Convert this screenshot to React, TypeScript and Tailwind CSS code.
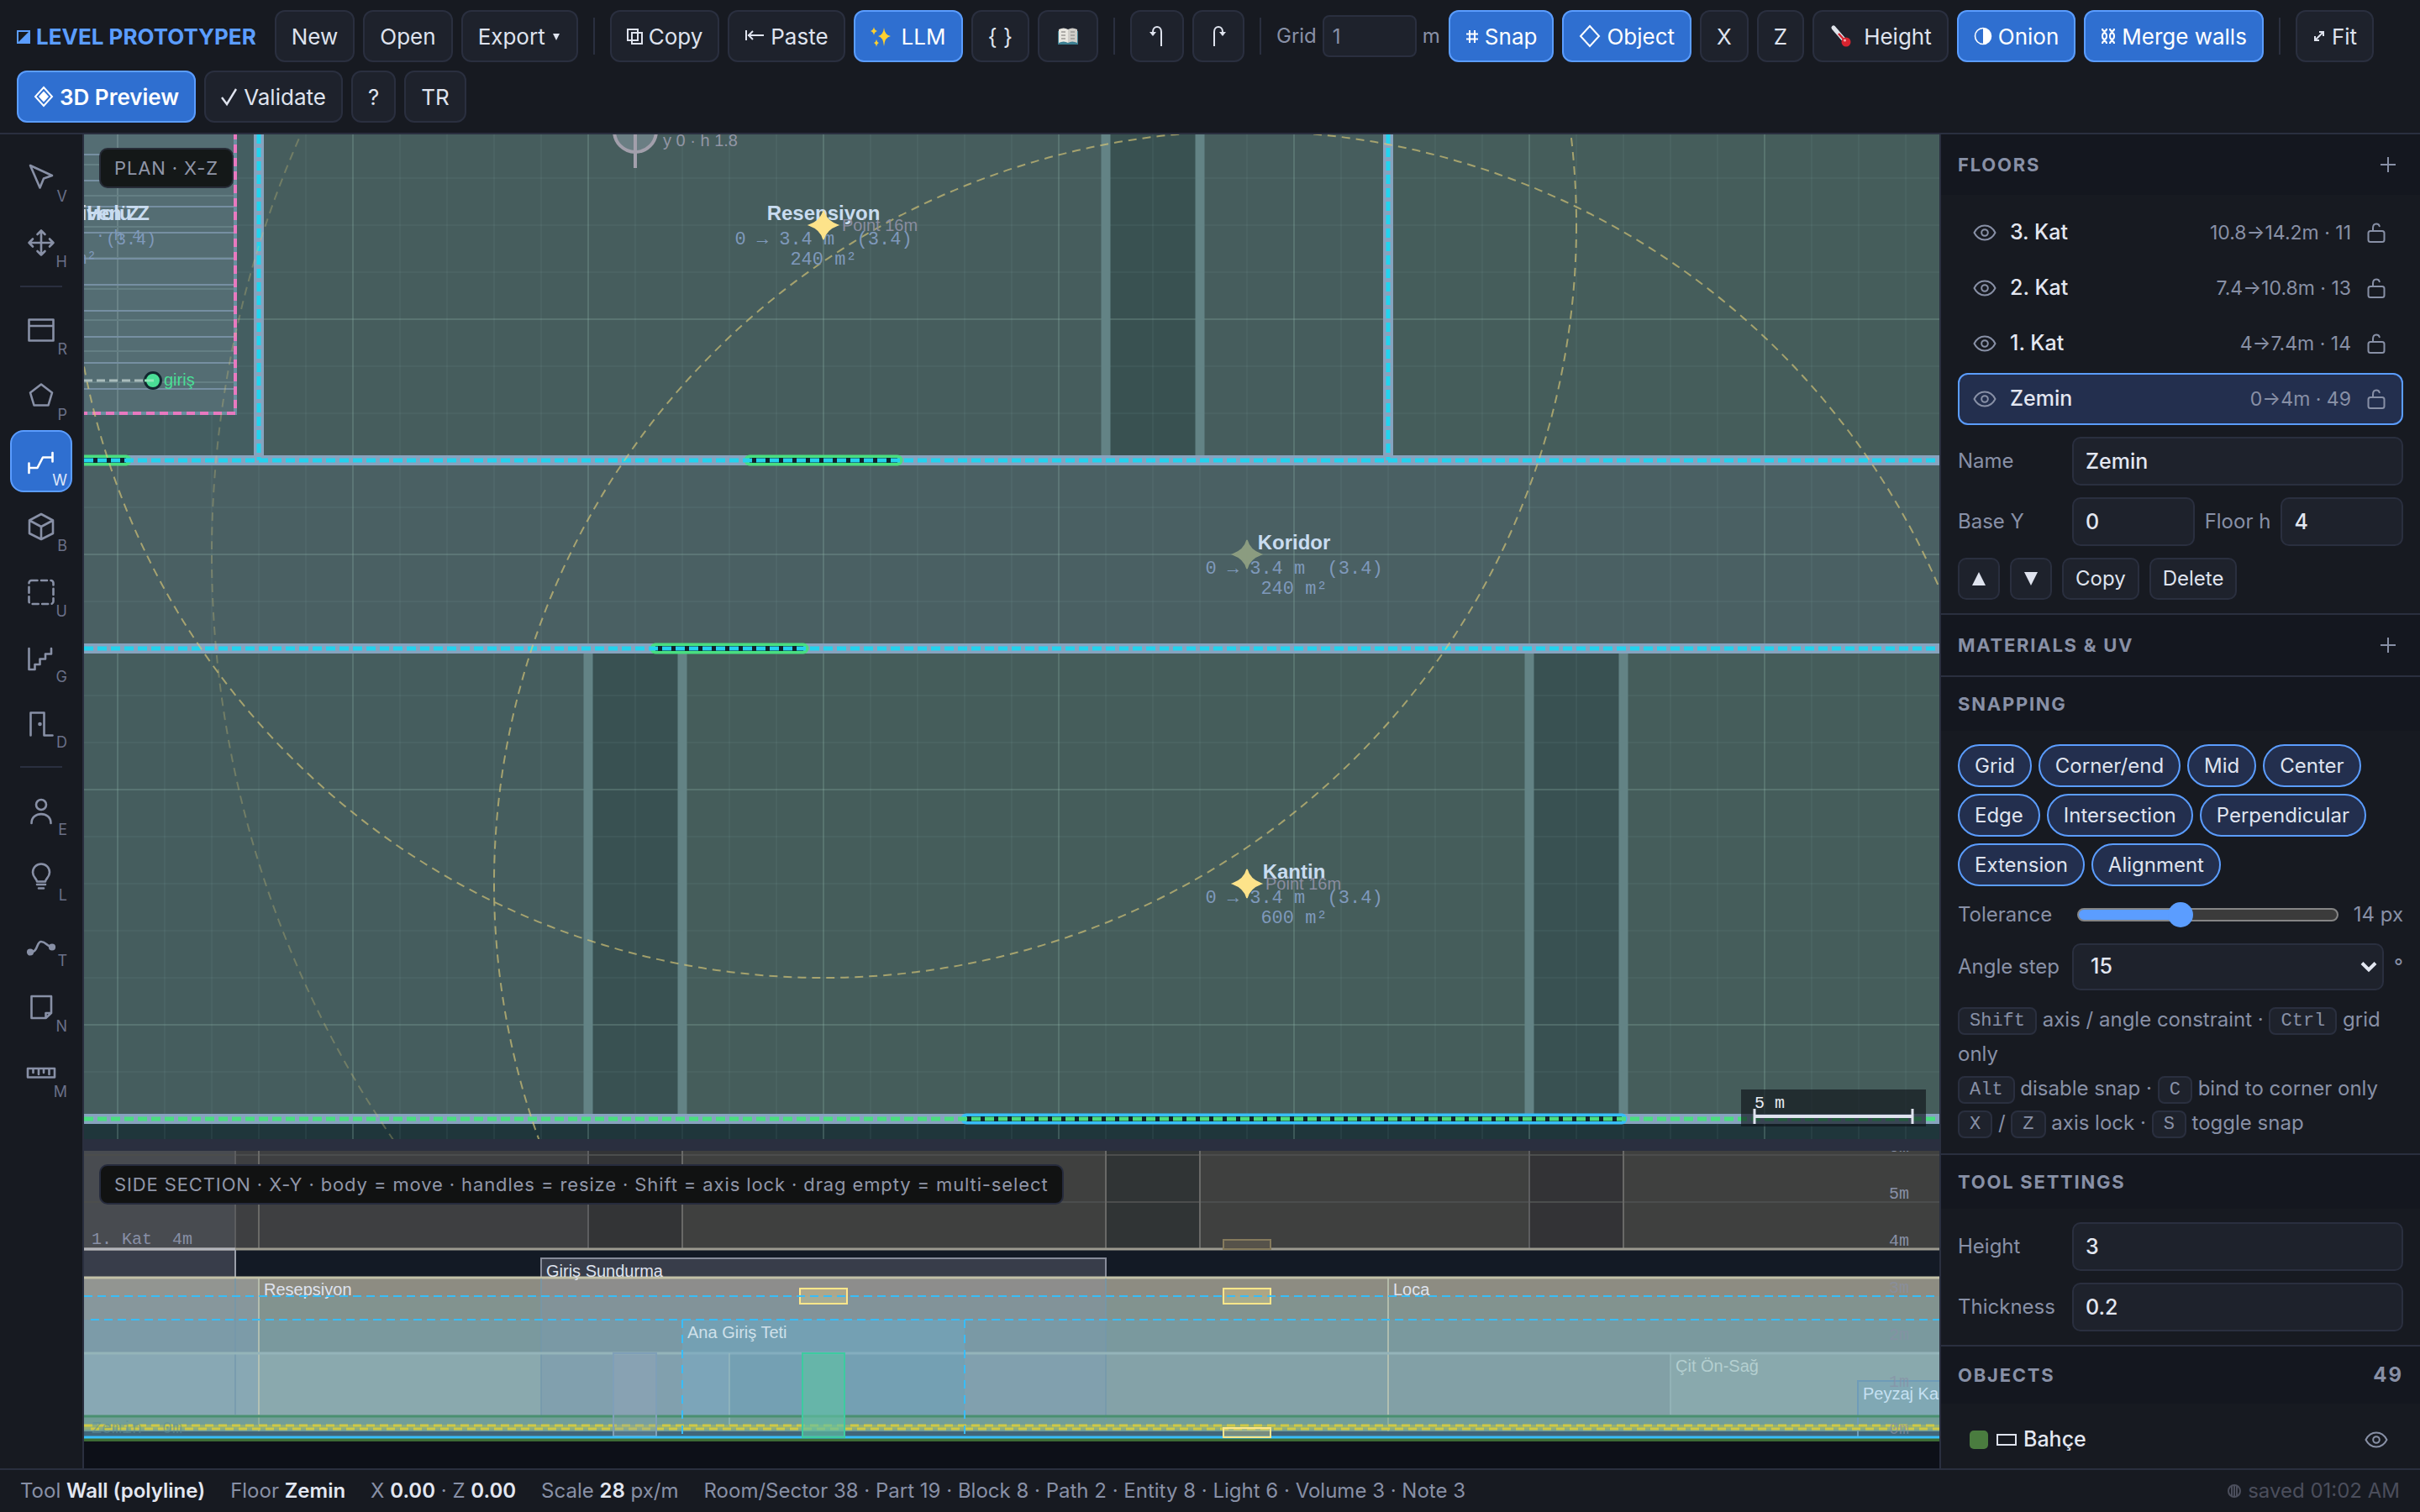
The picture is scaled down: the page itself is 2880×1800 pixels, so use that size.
import type { ReactNode } from "react";
import clsx from "clsx";

/* ---------- Icons ---------- */

function ToolIcon({ children }: { children: ReactNode }) {
  return (
    <svg
      viewBox="0 0 40 40"
      className="size-10"
      fill="none"
      stroke="currentColor"
      strokeWidth="2.6"
      strokeLinecap="round"
      strokeLinejoin="round"
      aria-hidden="true"
    >
      {children}
    </svg>
  );
}

function Glyph({ w, children }: { w: number; children: ReactNode }) {
  return (
    <svg
      width={w}
      height={28}
      viewBox={`0 0 ${w} 28`}
      className="shrink-0"
      fill="none"
      stroke="currentColor"
      strokeWidth="2"
      aria-hidden="true"
    >
      {children}
    </svg>
  );
}

function EyeIcon() {
  return (
    <svg viewBox="0 0 28 28" className="size-7 shrink-0" fill="none" stroke="currentColor" strokeWidth="2" aria-hidden="true">
      <path d="M1.5 14C4.5 8.2 9 5.5 14 5.5S23.5 8.2 26.5 14C23.5 19.8 19 22.5 14 22.5S4.5 19.8 1.5 14Z" strokeLinejoin="round" />
      <circle cx="14" cy="14" r="3.8" />
    </svg>
  );
}

function LockIcon() {
  return (
    <svg viewBox="0 0 28 28" className="size-7 shrink-0" fill="none" stroke="currentColor" strokeWidth="2" strokeLinecap="round" aria-hidden="true">
      <rect x="4.5" y="12" width="19" height="13" rx="2.5" />
      <path d="M10 12V8.5C10 5.5 11.5 3.5 14 3.5C16 3.5 17.3 4.5 17.8 6.2" />
    </svg>
  );
}

function PlusIcon() {
  return (
    <svg viewBox="0 0 20 20" className="size-5" stroke="currentColor" strokeWidth="2" aria-hidden="true">
      <path d="M10 1V19M1 10H19" />
    </svg>
  );
}

/* ---------- Top toolbar ---------- */

function Btn({ active, label, children }: { active?: boolean; label?: string; children: ReactNode }) {
  return (
    <button
      type="button"
      aria-label={label}
      className={clsx(
        "flex h-[62px] items-center gap-[7px] rounded-[12px] border-2 px-[18px] text-[26px] whitespace-nowrap",
        active ? "border-[#5b9dff] bg-[#2f6fd0] text-white" : "border-[#2a2f3f] bg-[#1e222c] text-[#dfe3ee]",
      )}
    >
      {children}
    </button>
  );
}

function Sep() {
  return <div className="mx-2 h-11 w-0.5 bg-[#2a2f3f]" />;
}

function Toolbar() {
  return (
    <header className="flex flex-wrap items-center gap-[10px] border-b-2 border-[#2a2f3f] bg-[#171a21] px-5 py-3">
      <h1 className="mr-3 flex items-center gap-[7px] text-[26px] font-bold whitespace-nowrap text-[#5b9dff]">
        <Glyph w={16}>
          <rect x="1" y="8" width="14" height="14" />
          <path d="M15 8V22H1Z" fill="currentColor" stroke="none" />
        </Glyph>
        LEVEL PROTOTYPER
      </h1>
      <Btn>New</Btn>
      <Btn>Open</Btn>
      <Btn>
        Export
        <Glyph w={12}>
          <path d="M2 11H10L6 19Z" fill="currentColor" stroke="none" />
        </Glyph>
      </Btn>
      <Sep />
      <Btn>
        <Glyph w={19}>
          <path d="M1 6H13V19H1ZM6 10H18V23H6Z" />
        </Glyph>
        Copy
      </Btn>
      <Btn>
        <Glyph w={24}>
          <path d="M2 7V19M4 13H23M10 8L5 13L10 18" />
        </Glyph>
        Paste
      </Btn>
      <Btn active>
        <Glyph w={30}>
          <g fill="#ffd02e" stroke="none">
            <path d="M16 4Q17 13 24 14Q17 15 16 26Q15 15 9 14Q15 13 16 4Z" />
            <path d="M4 3Q4.5 7 8 8Q4.5 9 4 13Q3.5 9 0 8Q3.5 7 4 3Z" />
            <path d="M7 18Q7.5 21 10 22Q7.5 23 7 27Q6.5 23 4 22Q6.5 21 7 18Z" />
          </g>
        </Glyph>
        LLM
      </Btn>
      <Btn label="JSON">{"{ }"}</Btn>
      <Btn label="Guide">
        <Glyph w={32}>
          <g stroke="none">
            <path d="M4 8H28V24H4Z" fill="#3d7f92" />
            <path d="M5 6Q11 3 16 6V22Q11 19 5 22Z" fill="#e8e6e0" />
            <path d="M27 6Q21 3 16 6V22Q21 19 27 22Z" fill="#cfcdc8" />
          </g>
          <path d="M8 9H13M8 13H13M8 17H13M19 9H24M19 13H24M19 17H24" stroke="#9b9995" strokeWidth="1.5" />
        </Glyph>
      </Btn>
      <Sep />
      <Btn label="Undo">
        <Glyph w={24}>
          <path d="M17 26V9C17 1 7 1 7 9V12" />
          <path d="M3 9H11L7 14Z" fill="currentColor" stroke="none" />
        </Glyph>
      </Btn>
      <Btn label="Redo">
        <Glyph w={22}>
          <path d="M6 26V9C6 1 16 1 16 9V12" />
          <path d="M12 9H20L16 14Z" fill="currentColor" stroke="none" />
        </Glyph>
      </Btn>
      <Sep />
      <label className="flex items-center gap-[7px] text-[24px] text-[#8890a6]">
        Grid
        <input
          type="text"
          inputMode="numeric"
          defaultValue="1"
          className="h-[50px] w-28 rounded-[8px] border-2 border-[#2a2f3f] bg-[#1e222c] px-[10px]"
        />
        m
      </label>
      <Btn active>
        <Glyph w={16}>
          <path d="M5 7V22M11 7V22M1 11.5H15M1 17.5H15" />
        </Glyph>
        Snap
      </Btn>
      <Btn active>
        <Glyph w={26}>
          <path d="M13 2L24 14L13 26L2 14Z" />
        </Glyph>
        Object
      </Btn>
      <Btn>X</Btn>
      <Btn>Z</Btn>
      <Btn>
        <Glyph w={34}>
          <path d="M5 4L18 19" stroke="#dfe3ea" strokeWidth="5" strokeLinecap="round" />
          <path d="M11 11L20 21" stroke="#d8232f" strokeWidth="2.5" />
          <circle cx="20" cy="21" r="5.5" fill="#d8232f" stroke="none" />
          <circle cx="18.5" cy="19" r="1.6" fill="#f4a5a9" stroke="none" />
        </Glyph>
        Height
      </Btn>
      <Btn active>
        <Glyph w={22}>
          <circle cx="11" cy="14" r="9.5" strokeWidth="1.6" />
          <path d="M11 4.5A9.5 9.5 0 0 1 11 23.5Z" fill="currentColor" stroke="none" />
        </Glyph>
        Onion
      </Btn>
      <Btn active>
        <Glyph w={18}>
          <path d="M2 5C2 9 7 9 7 5M2 23C2 19 7 19 7 23M11 5C11 9 16 9 16 5M11 23C11 19 16 19 16 23M4.5 8V10M13.5 8V10M4.5 18V20M13.5 18V20" />
          <ellipse cx="4.5" cy="14" rx="2.5" ry="3.8" />
          <ellipse cx="13.5" cy="14" rx="2.5" ry="3.8" />
        </Glyph>
        Merge walls
      </Btn>
      <Sep />
      <Btn>
        <Glyph w={16}>
          <path d="M3 19L13 9M8 9H13V14M3 14V19H8" />
        </Glyph>
        Fit
      </Btn>
      <Btn active>
        <Glyph w={24}>
          <path d="M12 3L22 14L12 25L2 14Z" />
          <path d="M12 7.5L18 14L12 20.5L6 14Z" fill="currentColor" stroke="none" />
        </Glyph>
        <span className="font-semibold">3D Preview</span>
      </Btn>
      <Btn>
        <Glyph w={20}>
          <path d="M1 15L7 23L18 5" strokeWidth="2.4" />
        </Glyph>
        Validate
      </Btn>
      <Btn>?</Btn>
      <Btn>TR</Btn>
    </header>
  );
}

/* ---------- Left tool rail ---------- */

const TOOLS: { key: string; name: string; breakAfter?: boolean; icon: ReactNode }[] = [
  { key: "V", name: "Select", icon: <path d="M7 6L33 18L23 21.5L18.5 32.5Z" /> },
  {
    key: "H",
    name: "Pan",
    breakAfter: true,
    icon: <path d="M20 5.5V34.5M5.5 20H34.5M15.5 10L20 5.5L24.5 10M15.5 30L20 34.5L24.5 30M10 15.5L5.5 20L10 24.5M30 15.5L34.5 20L30 24.5" />,
  },
  { key: "R", name: "Room", icon: <path d="M5.5 7.5H34.5V32.5H5.5ZM5.5 15H34.5" /> },
  { key: "P", name: "Polygon", icon: <path d="M20 6.5L33 16.5L28.5 31.5H11.5L7 16.5Z" /> },
  { key: "W", name: "Wall (polyline)", icon: <path d="M5.5 22.5V34M5.5 28H15.5L22 15.5H33.5M33.5 10V20.5" /> },
  { key: "B", name: "Block", icon: <path d="M20 5L34 12.5V28L20 35L6 28V12.5ZM6 12.5L20 20L34 12.5M20 20V35" /> },
  { key: "U", name: "Volume", icon: <rect x="5.5" y="6" width="29" height="28" rx="3" strokeDasharray="7 4.5" /> },
  { key: "G", name: "Stairs", icon: <path d="M5.5 9V34H12.5V28H18.5V21.5H25V15.5H32V9" /> },
  {
    key: "D",
    name: "Door",
    breakAfter: true,
    icon: (
      <>
        <path d="M7.5 34.5V7.5H23.5V34.5H33.5" />
        <circle cx="18.5" cy="21" r="1" />
      </>
    ),
  },
  {
    key: "E",
    name: "Entity",
    icon: (
      <>
        <circle cx="20" cy="13" r="6" />
        <path d="M8.5 35C8.5 20.5 31.5 20.5 31.5 35" />
      </>
    ),
  },
  {
    key: "L",
    name: "Light",
    icon: <path d="M15 26.5C15 23 10 21.5 10 15.5A10 10 0 0 1 30 15.5C30 21.5 25 23 25 26.5ZM15 30H25M17 34.5H23" />,
  },
  {
    key: "T",
    name: "Path",
    icon: (
      <>
        <path d="M7 32.5C17 32.5 14 20 20 20C26 20 27 26 33 26.5" />
        <circle cx="7" cy="32.5" r="2.8" fill="currentColor" />
        <circle cx="33" cy="26.5" r="2.8" fill="currentColor" />
      </>
    ),
  },
  { key: "N", name: "Note", icon: <path d="M8.5 7H32V27L25.5 33H8.5ZM25.5 33V27H32" /> },
  { key: "M", name: "Measure", icon: <path d="M4 15H36V25.5H4ZM10.5 15V20M17 15V22M23 15V20M29.5 15V22" /> },
];

function ToolRail() {
  return (
    <nav className="flex w-[100px] shrink-0 flex-col items-center gap-1 border-r-2 border-[#2a2f3f] bg-[#171a21] py-[14px]">
      {TOOLS.map((tool) => (
        <div key={tool.key} className="contents">
          <button
            type="button"
            title={tool.name}
            className={clsx(
              "relative flex size-[74px] shrink-0 items-center justify-center rounded-[16px] border-2",
              tool.key === "W" ? "border-[#5b9dff] bg-[#2f6fd0] text-white" : "border-transparent text-[#8890a6]",
            )}
          >
            <ToolIcon>{tool.icon}</ToolIcon>
            <span
              className={clsx(
                "absolute right-1 bottom-0 text-[18px] leading-6",
                tool.key === "W" ? "text-[#dfe8fa]" : "text-[#6a7088]",
              )}
            >
              {tool.key}
            </span>
          </button>
          {tool.breakAfter && <div className="my-[10px] h-0.5 w-[50px] shrink-0 bg-[#2a2f3f]" />}
        </div>
      ))}
    </nav>
  );
}

/* ---------- Plan view (X-Z) ---------- */

const MONO = "font-['Liberation_Mono',monospace]";
const SANS = "font-['Liberation_Sans',sans-serif]";

const steps = (from: number, to: number, by: number) => {
  const out: number[] = [];
  for (let v = from; v <= to; v += by) out.push(v);
  return out;
};

const MINOR_X = steps(140, 2308, 56);
const MAJOR_X = steps(140, 2308, 280);
const MINOR_Y = steps(212, 1300, 56);
const MAJOR_Y = steps(380, 1300, 280);

function RoomLabel({ x, y, name, area }: { x: number; y: number; name: string; area: string }) {
  return (
    <g textAnchor="middle">
      <text x={x} y={y} fill="#c9dcf0" className={`${SANS} text-[24px] font-bold`}>{name}</text>
      <text x={x} y={y + 29} fill="#7f99bb" className={`${MONO} text-[22px] whitespace-pre`}>{"0 → 3.4 m  (3.4)"}</text>
      <text x={x} y={y + 53} fill="#7f99bb" className={`${MONO} text-[22px]`}>{area}</text>
    </g>
  );
}

function Star({ x, y, fill }: { x: number; y: number; fill: string }) {
  return (
    <path
      transform={`translate(${x} ${y})`}
      d="M0 -17Q3 -5 17 0Q3 5 0 17Q-3 5 -17 0Q-3 -5 0 -17Z"
      fill={fill}
      stroke={fill}
      strokeWidth="1.5"
    />
  );
}

function Opening({ x1, x2, y, color }: { x1: number; x2: number; y: number; color: string }) {
  return (
    <>
      <path d={`M${x1} ${y}H${x2}`} stroke={color} strokeWidth="13" strokeLinecap="round" />
      <path d={`M${x1} ${y}H${x2}`} stroke="#10232c" strokeWidth="6" />
    </>
  );
}

function PlanView() {
  return (
    <section className="relative min-h-0 flex-1 overflow-hidden">
      <svg viewBox="100 160 2208 1196" preserveAspectRatio="xMinYMin slice" className="block size-full" fill="none">
        <rect x="100" y="160" width="2208" height="1196" fill="#1f363b" />
        <rect x="100" y="160" width="2208" height="1172" fill="#455d5b" />
        <rect x="100" y="160" width="208" height="388" fill="#445e61" />
        <rect x="308" y="160" width="1344" height="388" fill="#465d5d" />
        <rect x="100" y="548" width="2208" height="224" fill="#4a6063" />
        <rect x="100" y="772" width="600" height="560" fill="#455d5e" />

        {/* shafts between rooms */}
        <rect x="1316" y="160" width="112" height="388" fill="#395151" />
        <rect x="700" y="772" width="112" height="560" fill="#395152" />
        <rect x="1820" y="772" width="112" height="560" fill="#395152" />

        <g stroke="#8fb0ae" strokeOpacity="0.08" strokeWidth="2">
          {MINOR_X.map((x) => <path key={x} d={`M${x} 160V1356`} />)}
          {MINOR_Y.map((y) => <path key={y} d={`M100 ${y}H2308`} />)}
        </g>
        <g stroke="#8fb0a4" strokeOpacity="0.22" strokeWidth="2">
          {MAJOR_X.map((x) => <path key={x} d={`M${x} 160V1356`} />)}
          {MAJOR_Y.map((y) => <path key={y} d={`M100 ${y}H2308`} />)}
        </g>

        <g stroke="#638385" strokeWidth="11">
          <path d="M1316 160V548M1428 160V548M700 772V1332M812 772V1332M1820 772V1332M1932 772V1332" />
        </g>

        {/* staircase */}
        <rect x="60" y="120" width="220" height="372" fill="#546d73" />
        <path d="M140 160V492" stroke="#6a8387" strokeWidth="2" />
        <g stroke="#647f84" strokeWidth="2">
          {steps(196, 470, 37).map((y) => <path key={y} d={`M100 ${y}H280`} />)}
        </g>
        <g stroke="#768fa2" strokeWidth="2">
          {steps(184, 470, 31).map((y) => <path key={y} d={`M100 ${y}H280`} />)}
        </g>
        <rect x="60" y="120" width="220" height="372" stroke="#6b8fa0" strokeWidth="4" />
        <rect x="60" y="120" width="220" height="372" stroke="#e879c0" strokeWidth="4" strokeDasharray="10 6" />
        <text x="166" y="262" textAnchor="end" fill="#c9dcf0" className={`${SANS} text-[24px] font-bold`}>Merdiven Z</text>
        <text x="178" y="262" textAnchor="end" fill="#c9dcf0" className={`${SANS} text-[24px] font-bold`}>Holü Z</text>
        <text x="186" y="291" textAnchor="end" fill="#7f99bb" className={`${MONO} text-[20px]`}>(3.4)</text>
        <text x="168" y="286" textAnchor="end" fill="#7f99bb" className={`${MONO} text-[18px]`}>· h 4</text>
        <text x="115" y="314" textAnchor="end" fill="#7f99bb" className={`${MONO} text-[20px]`}>m²</text>

        {/* walls */}
        <g stroke="#87a3bf" strokeWidth="12">
          <path d="M308 160V548M1652 160V548" />
          <path d="M100 548H2308M100 772H2308M100 1332H2308" />
        </g>
        <Opening x1={90} x2={150} y={548} color="#4ade80" />
        <Opening x1={892} x2={1068} y={548} color="#4ade80" />
        <Opening x1={780} x2={956} y={772} color="#4ade80" />
        <Opening x1={1150} x2={1930} y={1332} color="#38bdf8" />
        <g stroke="#22d3ee" strokeWidth="5" strokeDasharray="11 5">
          <path d="M308 160V548M1652 160V548M100 548H2308M100 772H2308" />
          <path d="M100 1332H2308" stroke="#4ade80" />
        </g>

        {/* light ranges */}
        <g stroke="#d8c878" strokeWidth="2" strokeDasharray="10 7">
          <circle cx="980" cy="268" r="896" strokeOpacity="0.65" />
          <circle cx="1484" cy="1052" r="896" strokeOpacity="0.65" />
          <circle cx="1484" cy="660" r="1232" strokeOpacity="0.3" />
        </g>

        {/* path start */}
        <path d="M100 453H182" stroke="#a9bcbb" strokeWidth="3" strokeDasharray="10 5" />
        <circle cx="182" cy="453" r="9.5" fill="#4ade96" stroke="#12272f" strokeWidth="3" />
        <path d="M172 453H183" stroke="#8fe8b8" strokeWidth="3" />
        <text x="195" y="459" fill="#4ade96" className={`${SANS} text-[20px]`}>giriş</text>

        {/* spawn entity */}
        <circle cx="756" cy="156" r="25" fill="#6a7e83" stroke="#a29fab" strokeWidth="4" />
        <path d="M756 156V200" stroke="#a29fab" strokeWidth="4" />
        <text x="789" y="174" fill="#9296a5" className={`${SANS} text-[20px]`}>y 0 · h 1.8</text>

        <RoomLabel x={980} y={262} name="Resepsiyon" area="240 m²" />
        <RoomLabel x={1540} y={654} name="Koridor" area="240 m²" />
        <RoomLabel x={1540} y={1046} name="Kantin" area="600 m²" />
        <g fill="#8a8da0" className={`${SANS} text-[20px]`}>
          <text x="1002" y="275">Point 16m</text>
          <text x="1506" y="1059">Point 16m</text>
        </g>
        <Star x={980} y={268} fill="#fde38a" />
        <Star x={1484} y={660} fill="#8b9c80" />
        <Star x={1484} y={1052} fill="#fde38a" />

        {/* scale bar */}
        <rect x="2072" y="1297" width="220" height="44" fill="#10141a" fillOpacity="0.65" />
        <path d="M2088 1329H2276" stroke="#dfe3ee" strokeWidth="4" />
        <path d="M2088 1320V1338M2276 1320V1338" stroke="#dfe3ee" strokeWidth="3" />
        <text x="2088" y="1319" fill="#e8ebf2" className={`${MONO} text-[20px]`}>5 m</text>
      </svg>
      <div className="absolute top-4 left-[18px] rounded-[10px] border-2 border-[#262b36] bg-[#141818] px-4 py-2 text-[22px] leading-7 tracking-[0.04em] text-[#9096a8]">
        PLAN · X-Z
      </div>
    </section>
  );
}

/* ---------- Side section (X-Y) ---------- */

// x, y, width, height, fill
const SIDE_FILLS: [number, number, number, number, string][] = [
  [100, 1370, 2208, 346, "#131a25"],
  [100, 1370, 2208, 117, "#3f403f"],
  [100, 1370, 180, 117, "#484b50"],
  [280, 1370, 420, 117, "#3e3f41"],
  [700, 1370, 112, 117, "#333436"],
  [1316, 1370, 112, 117, "#303435"],
  [1820, 1370, 112, 117, "#333336"],
  [100, 1488, 180, 32, "#383d4a"],
  [644, 1498, 672, 24, "#383d4a"],
  [100, 1521, 2208, 22, "#8d8c82"],
  [100, 1521, 208, 22, "#929591"],
  [644, 1521, 672, 22, "#8d8d8c"],
  [100, 1543, 2208, 28, "#82938f"],
  [100, 1543, 208, 28, "#87979c"],
  [644, 1543, 672, 28, "#829399"],
  [100, 1571, 2208, 40, "#7a999e"],
  [100, 1571, 208, 40, "#7c9ba8"],
  [644, 1571, 672, 40, "#7a99a5"],
  [100, 1611, 2208, 74, "#84a2a8"],
  [100, 1611, 208, 74, "#88a8b4"],
  [308, 1611, 336, 74, "#8aa9ae"],
  [644, 1611, 672, 74, "#81a0ae"],
  [1652, 1611, 336, 74, "#82a0a6"],
  [1988, 1611, 320, 74, "#89a9ad"],
  [812, 1571, 336, 139, "#74a0b3"],
  [812, 1611, 56, 99, "#7ca5b9"],
  [730, 1611, 51, 99, "#88a2b3"],
  [2211, 1644, 97, 66, "#80a8b4"],
  [100, 1687, 2208, 17, "#729e98"],
  [100, 1704, 2208, 6, "#41667a"],
  [100, 1712, 2208, 4, "#3d6b34"],
];

function LightBox({ x, y, h }: { x: number; y: number; h: number }) {
  return <rect x={x} y={y} width="56" height={h} fill="#fde68a" fillOpacity="0.3" stroke="#fde68a" strokeWidth="2" />;
}

function SideSection() {
  return (
    <section className="relative h-[378px] shrink-0 overflow-hidden bg-[#0d1018]">
      <svg viewBox="100 1370 2208 378" preserveAspectRatio="xMinYMin slice" className="block size-full" fill="none">
        <rect x="100" y="1370" width="2208" height="378" fill="#0d1018" />
        {SIDE_FILLS.map(([x, y, w, h, fill], i) => <rect key={i} x={x} y={y} width={w} height={h} fill={fill} />)}

        {/* upper floor */}
        <path d="M100 1375H2308M100 1431H2308" stroke="#4b4d4d" strokeWidth="2" />
        <path d="M280 1370V1487M700 1370V1487M1820 1370V1487" stroke="#5c5d5f" strokeWidth="2" />
        <path d="M308 1370V1487M812 1370V1487M1316 1370V1487M1428 1370V1487M1932 1370V1487" stroke="#696967" strokeWidth="2" />
        <path d="M100 1487H2308" stroke="#9c9a8f" strokeWidth="3" />
        <path d="M100 1487H280" stroke="#b3b5bc" strokeWidth="3" />
        <rect x="1456" y="1476" width="56" height="11" fill="#56524a" stroke="#857a5c" strokeWidth="2" />

        {/* canopy and room outlines */}
        <path d="M280 1488V1520" stroke="#9a9fa9" strokeWidth="2" />
        <path d="M644 1521V1498H1316V1521" stroke="#868b99" strokeWidth="2" />
        <path d="M100 1521H2308" stroke="#c3c2a8" strokeWidth="3" />
        <path d="M280 1522V1684M644 1522V1704M1316 1522V1690" stroke="#7397ab" strokeOpacity="0.7" strokeWidth="2" />
        <path d="M308 1522V1684M1652 1522V1684" stroke="#c0c9b6" strokeOpacity="0.75" strokeWidth="2" />
        <path d="M308 1684V1704M1652 1684V1704" stroke="#8fae9c" strokeWidth="2" />
        <path d="M100 1611H812M1148 1611H2308" stroke="#94b4b9" strokeWidth="3" />
        <path d="M812 1611H1148" stroke="#84aebf" strokeWidth="3" />
        <path d="M1988 1611V1684M868 1611V1700" stroke="#9bbcc0" strokeOpacity="0.6" strokeWidth="2" />
        <path d="M2211 1710V1644H2308" stroke="#6f9cb8" strokeWidth="2" />

        {/* ground slab */}
        <path d="M100 1686H2308" stroke="#4a9070" strokeWidth="3" />
        <path d="M100 1699H2308" stroke="#90ae78" strokeWidth="6" />
        <path d="M100 1697H2308M108 1701H2308" stroke="#cfc945" strokeWidth="3" strokeDasharray="10 6" />
        <text x="109" y="1706" fill="#5f8f98" fillOpacity="0.6" className={`${MONO} text-[20px] whitespace-pre`}>{"Zemin  0m"}</text>
        <rect x="730" y="1611" width="51" height="99" fill="#88a2b3" fillOpacity="0.3" stroke="#7f9fb8" strokeWidth="2" />
        <path d="M100 1711H2308" stroke="#38bdf8" strokeWidth="3" />

        <path d="M812 1571V1710M1148 1571V1710" stroke="#38bdf8" strokeWidth="2" strokeDasharray="10 8" />
        <rect x="955" y="1611" width="50" height="100" fill="#5fc0a5" fillOpacity="0.65" stroke="#3dcba0" strokeWidth="2" />
        <LightBox x={952} y={1534} h={18} />
        <LightBox x={1456} y={1534} h={18} />
        <LightBox x={1456} y={1700} h={11} />

        <g fill="#dfe3ee" className={`${SANS} text-[20px]`}>
          <text x="650" y="1520">Giriş Sundurma</text>
          <text x="314" y="1542">Resepsiyon</text>
          <text x="1658" y="1542">Loca</text>
          <text x="818" y="1593" fill="#cfe0ea">Ana Giriş Teti</text>
          <text x="1994" y="1633" fill="#b4cfd0">Çit Ön-Sağ</text>
          <text x="2217" y="1666" fill="#c5e0f2">Peyzaj Kaldırımı</text>
        </g>
        <path d="M100 1543H2308M108 1571H2308" stroke="#38bdf8" strokeWidth="2" strokeDasharray="10 6" />

        <g fill="#8890a6" className={`${MONO} text-[20px]`}>
          <text x="109" y="1481" className="whitespace-pre">{"1. Kat  4m"}</text>
          <text x="2248" y="1371">6m</text>
          <text x="2248" y="1427">5m</text>
          <text x="2248" y="1483">4m</text>
          <g fillOpacity="0.7">
            <text x="2248" y="1539">3m</text>
            <text x="2248" y="1595">2m</text>
            <text x="2248" y="1651">1m</text>
            <text x="2248" y="1707">0m</text>
          </g>
        </g>
      </svg>
      <div className="absolute top-4 left-[18px] rounded-[10px] border-2 border-[#262b3d] bg-[#111212] px-4 py-2 text-[22px] leading-7 tracking-[0.04em] whitespace-nowrap text-[#9096a8]">
        SIDE SECTION · X-Y · body = move · handles = resize · Shift = axis lock · drag empty = multi-select
      </div>
    </section>
  );
}

/* ---------- Right panel ---------- */

const FLOORS = [
  { name: "3. Kat", info: "10.8→14.2m · 11" },
  { name: "2. Kat", info: "7.4→10.8m · 13" },
  { name: "1. Kat", info: "4→7.4m · 14" },
  { name: "Zemin", info: "0→4m · 49", active: true },
];

const SNAPS = ["Grid", "Corner/end", "Mid", "Center", "Edge", "Intersection", "Perpendicular", "Extension", "Alignment"];

const inputClass =
  "h-[58px] min-w-0 flex-1 rounded-[10px] border-2 border-[#2a2f3f] bg-[#1e222c] px-[14px] text-[25px] font-medium text-[#e3e7f1]";

function PanelHead({ title, className, children }: { title: string; className: string; children?: ReactNode }) {
  return (
    <div className={clsx("flex items-center justify-between bg-[#14171f] px-5", className)}>
      <h2 className="text-[22px] font-bold tracking-[0.08em]">{title}</h2>
      {children}
    </div>
  );
}

function AddButton({ label }: { label: string }) {
  return (
    <button type="button" aria-label={label} className="mr-2">
      <PlusIcon />
    </button>
  );
}

function Field({ id, label, value }: { id: string; label: string; value: string }) {
  return (
    <div className="flex items-center gap-3">
      <label htmlFor={id} className="w-[124px]">{label}</label>
      <input id={id} defaultValue={value} className={inputClass} />
    </div>
  );
}

function SmallButton({ label, children }: { label?: string; children: ReactNode }) {
  return (
    <button
      type="button"
      aria-label={label}
      className="flex h-[50px] items-center rounded-[10px] border-2 border-[#2a2f3f] bg-[#1e222c] px-[14px] text-[#dfe3ee]"
    >
      {children}
    </button>
  );
}

function Kbd({ children }: { children: ReactNode }) {
  return (
    <kbd className="inline-block rounded-[8px] border-2 border-[#2a2f3f] bg-[#1e222c] px-3 align-middle font-['Liberation_Mono',monospace] text-[22px] leading-[29px]">
      {children}
    </kbd>
  );
}

function RightPanel() {
  return (
    <aside className="flex w-[572px] shrink-0 flex-col divide-y-2 divide-[#2a2f3f] overflow-hidden border-l-2 border-[#2a2f3f] bg-[#171a21] text-[24px] text-[#8890a6] *:shrink-0">
      <section>
        <PanelHead title="FLOORS" className="h-[72px]">
          <AddButton label="Add floor" />
        </PanelHead>
        <div className="flex flex-col gap-[14px] px-5 pt-[14px] pb-4">
          <ul className="flex flex-col gap-1">
            {FLOORS.map((floor) => (
              <li
                key={floor.name}
                className={clsx(
                  "flex h-[62px] items-center gap-4 rounded-[12px] border-2 px-4",
                  floor.active ? "border-[#5b9dff] bg-[#232f4e]" : "border-transparent",
                )}
              >
                <button type="button" aria-label="Toggle visibility"><EyeIcon /></button>
                <span className="flex-1 text-[25px] font-medium text-[#e3e7f1]">{floor.name}</span>
                <span className="text-[23px]">{floor.info}</span>
                <button type="button" aria-label="Toggle lock"><LockIcon /></button>
              </li>
            ))}
          </ul>
          <Field id="floor-name" label="Name" value="Zemin" />
          <div className="flex items-center gap-3">
            <label htmlFor="base-y" className="w-[124px]">Base Y</label>
            <input id="base-y" defaultValue="0" className={inputClass} />
            <label htmlFor="floor-h">Floor h</label>
            <input id="floor-h" defaultValue="4" className={inputClass} />
          </div>
          <div className="flex gap-3">
            <SmallButton label="Move up">
              <svg viewBox="0 0 18 18" className="size-[18px]" fill="currentColor"><path d="M9 1L17 17H1Z" /></svg>
            </SmallButton>
            <SmallButton label="Move down">
              <svg viewBox="0 0 18 18" className="size-[18px]" fill="currentColor"><path d="M9 17L17 1H1Z" /></svg>
            </SmallButton>
            <SmallButton>Copy</SmallButton>
            <SmallButton>Delete</SmallButton>
          </div>
        </div>
      </section>

      <section>
        <PanelHead title="MATERIALS & UV" className="h-[72px]">
          <AddButton label="Add material" />
        </PanelHead>
      </section>

      <section>
        <PanelHead title="SNAPPING" className="h-16" />
        <div className="flex flex-col gap-[14px] px-5 py-4">
          <div className="flex flex-wrap gap-2">
            {SNAPS.map((snap) => (
              <button
                key={snap}
                type="button"
                aria-pressed="true"
                className="h-[51px] rounded-full border-2 border-[#5b9dff] bg-[#232f4e] px-[18px] text-[#dfe3ee]"
              >
                {snap}
              </button>
            ))}
          </div>
          <div className="flex h-10 items-center gap-[18px]">
            <label htmlFor="tolerance" className="w-[124px]">Tolerance</label>
            <input
              id="tolerance"
              type="range"
              min="4"
              max="30"
              defaultValue="14"
              className="h-4 min-w-0 flex-1 appearance-none rounded-full border-2 border-[#858585] bg-linear-to-r from-[#5b9dff] from-40% to-[#3b3b3b] to-40% [&::-webkit-slider-thumb]:size-[30px] [&::-webkit-slider-thumb]:appearance-none [&::-webkit-slider-thumb]:rounded-full [&::-webkit-slider-thumb]:bg-[#5b9dff]"
            />
            <output htmlFor="tolerance">14 px</output>
          </div>
          <div className="flex items-center gap-3">
            <label htmlFor="angle-step" className="w-[124px] whitespace-nowrap">Angle step</label>
            <div className="relative flex-1">
              <select
                id="angle-step"
                defaultValue="15"
                className="block h-14 w-full appearance-none rounded-[10px] border-2 border-[#2a2f3f] bg-[#1e222c] px-5 text-[25px] font-medium text-[#e3e7f1]"
              >
                <option>5</option>
                <option>15</option>
                <option>45</option>
              </select>
              <svg viewBox="0 0 20 14" className="pointer-events-none absolute top-[21px] right-2 h-[14px] w-5" fill="none" stroke="#e3e7f1" strokeWidth="4">
                <path d="M2 2.5L10 10.5L18 2.5" />
              </svg>
            </div>
            <span>°</span>
          </div>
          <p className="leading-[41px]">
            <Kbd>Shift</Kbd> axis / angle constraint · <Kbd>Ctrl</Kbd> grid only
            <br />
            <Kbd>Alt</Kbd> disable snap · <Kbd>C</Kbd> bind to corner only
            <br />
            <Kbd>X</Kbd> / <Kbd>Z</Kbd> axis lock · <Kbd>S</Kbd> toggle snap
          </p>
        </div>
      </section>

      <section>
        <PanelHead title="TOOL SETTINGS" className="h-16" />
        <div className="flex flex-col gap-[14px] px-5 py-4">
          <Field id="wall-height" label="Height" value="3" />
          <Field id="wall-thickness" label="Thickness" value="0.2" />
        </div>
      </section>

      <section>
        <PanelHead title="OBJECTS" className="h-[68px]">
          <span className="font-bold tracking-[0.08em]">49</span>
        </PanelHead>
        <ul className="px-5 py-[14px]">
          <li className="flex h-[58px] items-center border-2 border-transparent pr-4 pl-3">
            <span className="size-[22px] rounded-[5px] bg-[#4a7c3f]" />
            <svg viewBox="0 0 24 14" className="mr-2 ml-[10px] h-[14px] w-6" fill="none" stroke="#dfe3ee" strokeWidth="2">
              <rect x="1" y="1" width="22" height="12" />
            </svg>
            <span className="flex-1 text-[25px] font-medium text-[#e3e7f1]">Bahçe</span>
            <button type="button" aria-label="Toggle visibility"><EyeIcon /></button>
          </li>
        </ul>
      </section>
    </aside>
  );
}

/* ---------- Status bar ---------- */

function StatusBar() {
  return (
    <footer className="flex h-[52px] shrink-0 items-center gap-[30px] border-t-2 border-[#2a2f3f] bg-[#171a21] px-6 text-[24px] whitespace-nowrap text-[#8890a6] [&_b]:font-semibold [&_b]:text-[#e3e7f1]">
      <span>Tool <b>Wall (polyline)</b></span>
      <span>Floor <b>Zemin</b></span>
      <span>X <b>0.00</b> · Z <b>0.00</b></span>
      <span>Scale <b>28</b> px/m</span>
      <span>Room/Sector 38 · Part 19 · Block 8 · Path 2 · Entity 8 · Light 6 · Volume 3 · Note 3</span>
      <span className="ml-auto flex items-center gap-2 text-[#4b4e5c]">
        <svg viewBox="0 0 16 16" className="size-4" fill="none" stroke="currentColor" strokeWidth="2" aria-hidden="true">
          <circle cx="8" cy="8" r="7" />
          <path d="M5 2V14M8 1V15M11 2V14" />
        </svg>
        saved 01:02 AM
      </span>
    </footer>
  );
}

export default function App() {
  return (
    <div className="flex h-screen flex-col bg-[#0d1018] font-[Inter,sans-serif]">
      <Toolbar />
      <div className="flex min-h-0 flex-1">
        <ToolRail />
        <main className="flex min-w-0 flex-1 flex-col">
          <PlanView />
          <div className="h-[14px] shrink-0 bg-[#2a2f3f]" />
          <SideSection />
        </main>
        <RightPanel />
      </div>
      <StatusBar />
    </div>
  );
}
